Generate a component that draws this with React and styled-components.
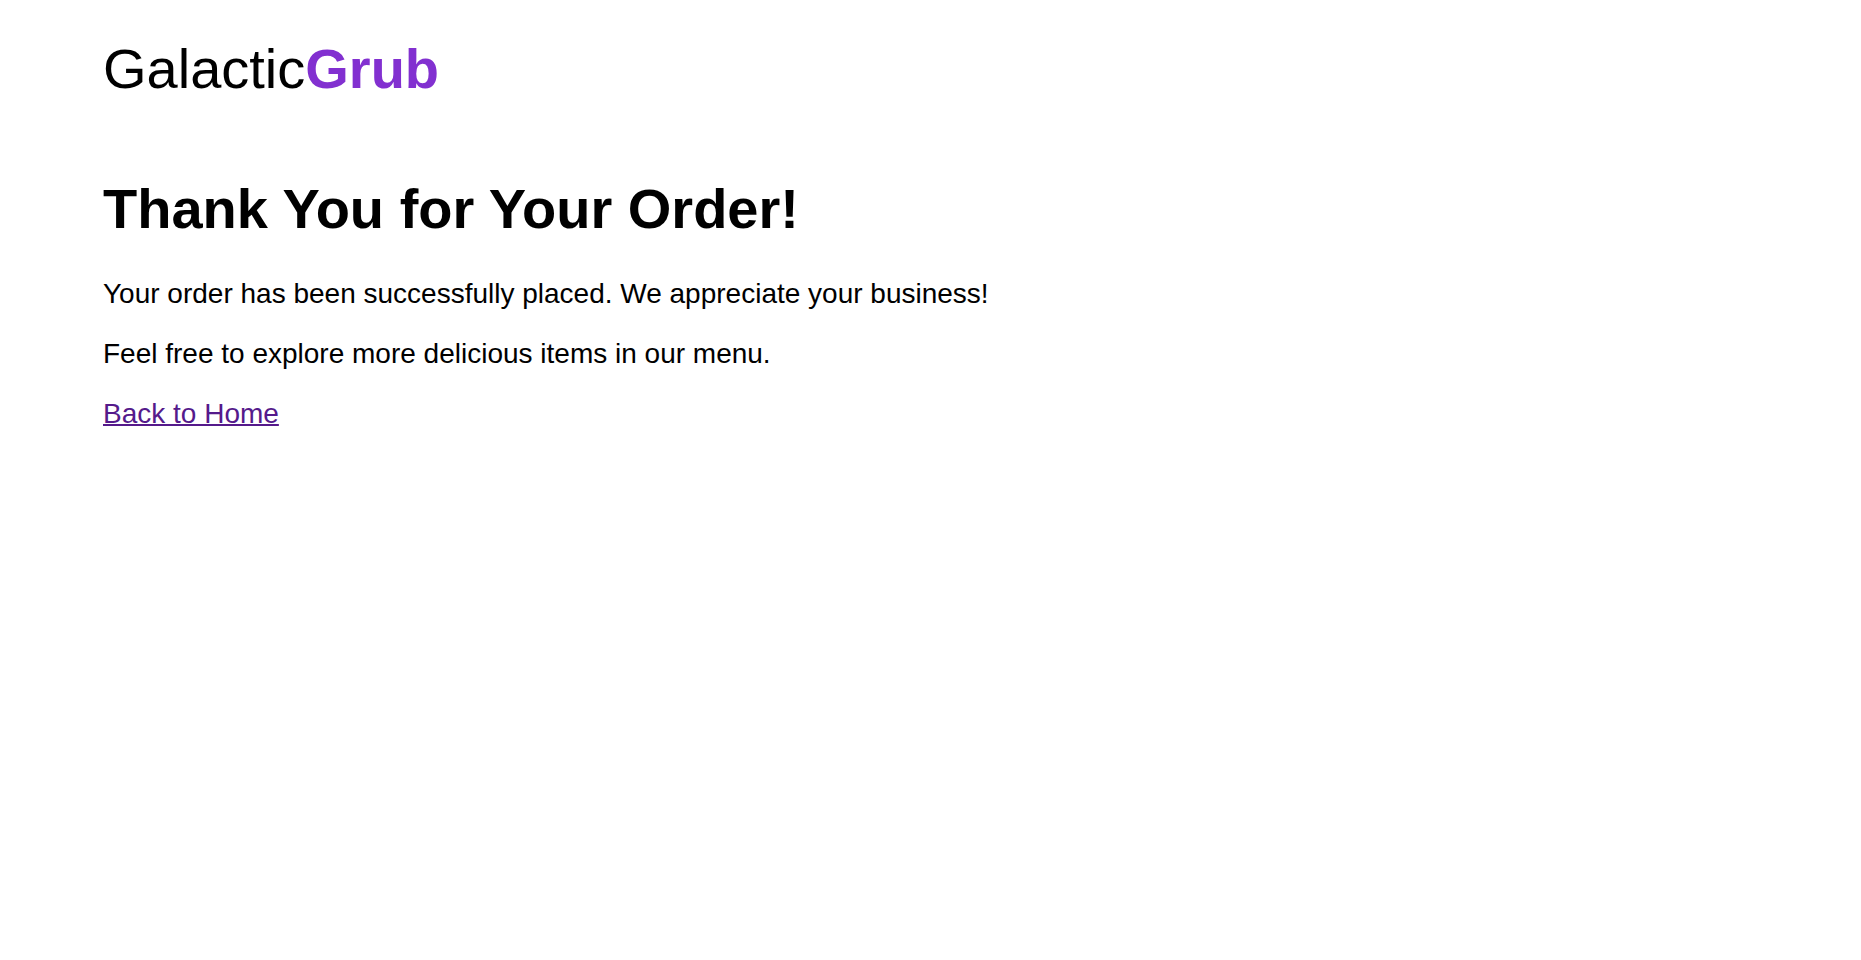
import styled, { createGlobalStyle } from 'styled-components';

const GlobalStyle = createGlobalStyle`
  body {
    margin: 0;
    background: #fff;
    color: #000;
    font-family: Arial, "Liberation Sans", sans-serif;
    font-size: 28px;
  }
`;

const Page = styled.div`
  padding: 35px 103px;
`;

const Logo = styled.div`
  font-size: 56px;
  line-height: 68px;

  span {
    color: #8230d0;
    font-weight: 700;
  }
`;

const Title = styled.h1`
  margin: 74px 0 37px;
  font-size: 56px;
  line-height: 64px;
`;

const Text = styled.p`
  margin: 28px 0;
  line-height: 32px;
`;

const HomeLink = styled.a`
  color: #551a8b;
  line-height: 32px;
  text-decoration-thickness: 2px;
`;

const App = () => (
  <>
    <GlobalStyle />
    <Page>
      <Logo>
        Galactic<span>Grub</span>
      </Logo>
      <main>
        <Title>Thank You for Your Order!</Title>
        <Text>Your order has been successfully placed. We appreciate your business!</Text>
        <Text>Feel free to explore more delicious items in our menu.</Text>
        <HomeLink href="#">Back to Home</HomeLink>
      </main>
    </Page>
  </>
);

export default App;
